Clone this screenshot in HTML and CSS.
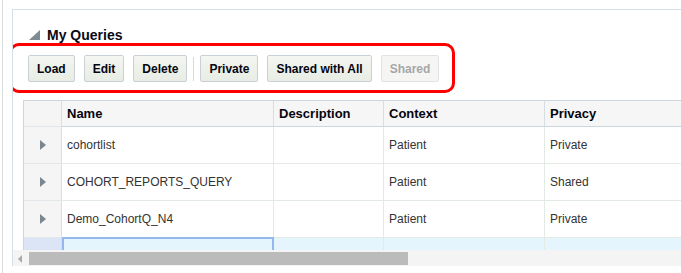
FILE: index.html
```html
<!DOCTYPE html>
<html>
<head>
<meta charset="utf-8">
<link rel="stylesheet" href="styles.css">
</head>
<body>
<div class="page">
  <div class="panel">
    <div class="panel-header">
      <svg class="disclosure" width="11" height="10" viewBox="0 0 11 10"><polygon points="11,0 11,10 0,10" fill="#7f8a93"/></svg>
      <span class="title">My Queries</span>
    </div>
    <div class="toolbar">
      <button class="btn">Load</button>
      <button class="btn">Edit</button>
      <button class="btn">Delete</button>
      <span class="sep"></span>
      <button class="btn">Private</button>
      <button class="btn">Shared with All</button>
      <button class="btn disabled">Shared</button>
    </div>
    <div class="grid-wrap">
      <div class="row head">
        <div class="cell exp"></div>
        <div class="cell">Name</div>
        <div class="cell">Description</div>
        <div class="cell">Context</div>
        <div class="cell">Privacy</div>
      </div>
      <div class="row body">
        <div class="cell exp"><span class="arrow"></span></div>
        <div class="cell">cohortlist</div>
        <div class="cell"></div>
        <div class="cell">Patient</div>
        <div class="cell">Private</div>
      </div>
      <div class="row body">
        <div class="cell exp"><span class="arrow"></span></div>
        <div class="cell">COHORT_REPORTS_QUERY</div>
        <div class="cell"></div>
        <div class="cell">Patient</div>
        <div class="cell">Shared</div>
      </div>
      <div class="row body">
        <div class="cell exp"><span class="arrow"></span></div>
        <div class="cell">Demo_CohortQ_N4</div>
        <div class="cell"></div>
        <div class="cell">Patient</div>
        <div class="cell">Private</div>
      </div>
      <div class="row body sel">
        <div class="cell exp"></div>
        <div class="cell focus"></div>
        <div class="cell"></div>
        <div class="cell"></div>
        <div class="cell"></div>
      </div>
    </div>
    <div class="hscroll">
      <span class="sarrow"></span>
      <span class="thumb"></span>
    </div>
    <div class="annot"></div>
  </div>
</div>
</body>
</html>
```

FILE: styles.css
```css
* { box-sizing: border-box; }
html, body {
  margin: 0;
  padding: 0;
  background: #fff;
  font-family: "Liberation Sans", Arial, sans-serif;
}
.page {
  margin-left: 2px;
  border-left: 1px solid #dadde0;
  padding-left: 9px;
  height: 273px;
  overflow: hidden;
}
.panel {
  position: relative;
  margin-top: 9px;
  border-top: 1px solid #d6dfe6;
  border-left: 1px solid #d6dfe6;
  overflow: hidden;
  height: 257px;
}
.panel-header {
  display: flex;
  align-items: center;
  height: 16px;
  margin-top: 17px;
  padding-left: 16px;
}
.disclosure { display: block; margin-top: 0; }
.title {
  margin-left: 7px;
  font-size: 14px;
  font-weight: bold;
  line-height: 16px;
  color: #0a0a14;
}
.toolbar {
  display: flex;
  align-items: center;
  margin-top: 12px;
  padding-left: 15px;
  height: 27px;
}
.btn {
  height: 27px;
  padding: 0 8px;
  margin-right: 9px;
  font-family: "Liberation Sans", Arial, sans-serif;
  font-size: 12px;
  font-weight: bold;
  color: #05050f;
  background: linear-gradient(#f6f7f4 0%, #eef2eb 40%, #e8ede4 100%);
  border: 1px solid #c9d0d6;
  border-radius: 2px;
}
.btn.disabled {
  color: #a6a6a6;
  background: #f5f6f4;
  border-color: #dfe3e6;
}
.sep {
  width: 1px;
  height: 24px;
  background: #d3d9de;
  margin: 0 6px 0 -3px;
}
.grid-wrap {
  margin-top: 18px;
  margin-left: 10px;
  height: 150px;
  border-top: 1px solid #cdd7e0;
  border-left: 1px solid #cdd7e0;
  overflow: hidden;
}
.row {
  display: grid;
  grid-template-columns: 38px 212px 110px 161px 300px;
  width: 821px;
}
.cell {
  display: flex;
  align-items: center;
  padding-left: 5px;
  border-right: 1px solid #e3e9e3;
  border-bottom: 1px solid #e3e9e3;
  font-size: 12px;
  color: #333;
  white-space: nowrap;
}
.head .cell {
  height: 26px;
  background: #f6f6f6;
  border-bottom: 1px solid #ccd6df;
  border-right: 1px solid #d5dde5;
  font-size: 13px;
  font-weight: bold;
  color: #05050f;
}
.body .cell { height: 37px; }
.cell.exp {
  background: #f5f5f5;
  border-right: 1px solid #d6dfe6;
  border-bottom: 1px solid #e0e6ea;
  justify-content: center;
  padding-left: 0;
}
.arrow {
  width: 0;
  height: 0;
  border-top: 5px solid transparent;
  border-bottom: 5px solid transparent;
  border-left: 6px solid #7b868f;
}
.sel .cell { background: #e5f5fd; height: 20px; align-items: flex-start; }
.sel .cell.exp { background: #dce5f5; }
.sel .cell.focus {
  border: 2px solid #92b8ee;
  border-bottom: none;
  margin-top: -1px;
}
.hscroll {
  position: relative;
  display: flex;
  align-items: center;
  margin-left: -1px;
  height: 16px;
  background: #f4f4f4;
}
.sarrow {
  position: absolute;
  left: 6px;
  top: 5px;
  width: 0;
  height: 0;
  border-top: 4px solid transparent;
  border-bottom: 4px solid transparent;
  border-right: 4px solid #a9a9a9;
}
.thumb {
  position: absolute;
  left: 17px;
  top: 2px;
  width: 379px;
  height: 13px;
  background: #bbbbbb;
}
.annot {
  position: absolute;
  left: -4px;
  top: 33px;
  width: 446px;
  height: 50px;
  border: 3px solid #ff0000;
  border-radius: 10px;
  pointer-events: none;
}
```
